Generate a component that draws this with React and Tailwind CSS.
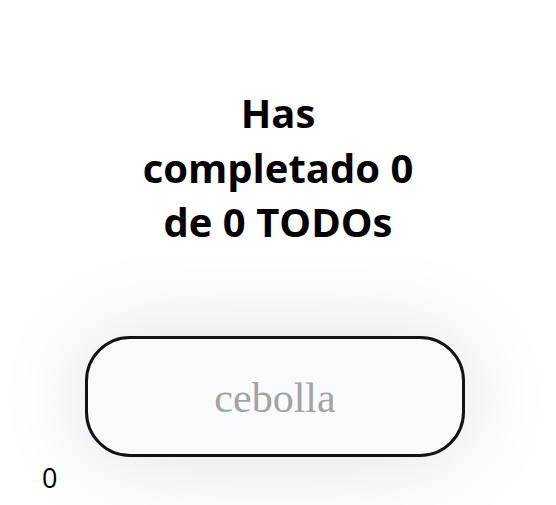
export default function App() {
  return (
    <div className="min-h-screen bg-white font-['Open_Sans',sans-serif] text-black">
      <h1 className="mx-auto w-[300px] pt-[86px] text-center text-[40px] font-bold leading-[54.5px]">
        Has completado 0 de 0 TODOs
      </h1>
      <form className="mt-[86px]">
        <input
          type="text"
          placeholder="cebolla"
          className="ml-[85px] block h-[121px] w-[380px] rounded-[45px] border-[3px] border-[#111118] bg-[#f9fafb] pt-[4px] text-center font-['Liberation_Serif',serif] text-[42px] shadow-[0_0_90px_rgba(0,0,0,0.13)] outline-none placeholder:text-[#a3a3a3]"
        />
      </form>
      <p className="ml-[42px] mt-[6px] text-[27px] leading-[30px]">0</p>
    </div>
  );
}
